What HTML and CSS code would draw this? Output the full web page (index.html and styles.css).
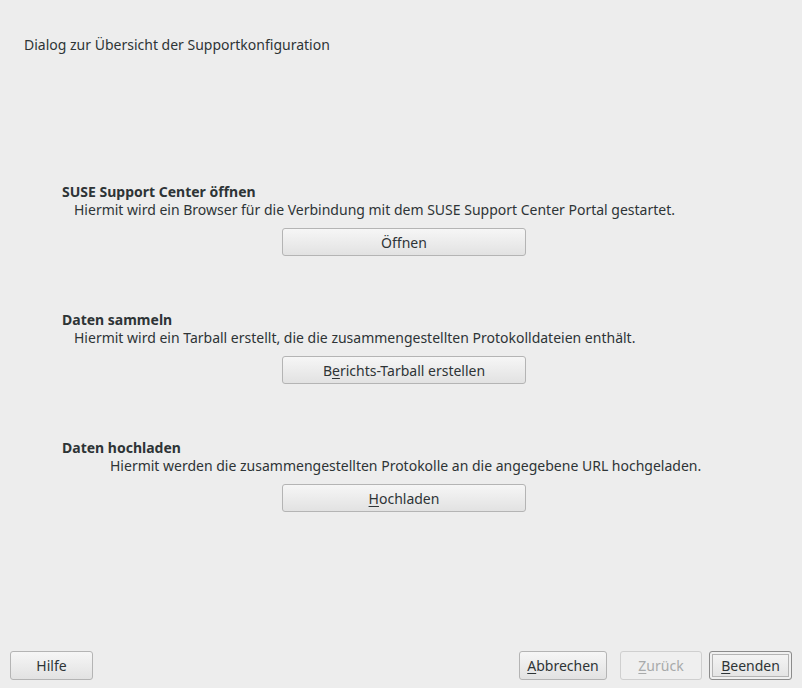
FILE: index.html
```html
<!DOCTYPE html>
<html lang="de">
<head>
<meta charset="utf-8">
<title>Supportkonfiguration</title>
<link rel="stylesheet" href="styles.css">
</head>
<body>
<div class="window">
  <div class="title">Dialog zur Übersicht der Supportkonfiguration</div>
  <div class="content">
    <section class="group">
      <div class="heading">SUSE Support Center öffnen</div>
      <div class="desc">Hiermit wird ein Browser für die Verbindung mit dem SUSE Support Center Portal gestartet.</div>
      <div class="row"><button class="btn wide">Öffnen</button></div>
    </section>
    <section class="group">
      <div class="heading">Daten sammeln</div>
      <div class="desc">Hiermit wird ein Tarball erstellt, die die zusammengestellten Protokolldateien enthält.</div>
      <div class="row"><button class="btn wide">B<u>e</u>richts-Tarball erstellen</button></div>
    </section>
    <section class="group">
      <div class="heading">Daten hochladen</div>
      <div class="desc desc-far">Hiermit werden die zusammengestellten Protokolle an die angegebene URL hochgeladen.</div>
      <div class="row"><button class="btn wide"><u>H</u>ochladen</button></div>
    </section>
  </div>
  <div class="footer">
    <button class="btn small">Hilfe</button>
    <div class="spacer"></div>
    <button class="btn small abort"><u>A</u>bbrechen</button>
    <button class="btn small" disabled><u>Z</u>urück</button>
    <button class="btn small default"><u>B</u>eenden</button>
  </div>
</div>
</body>
</html>
```

FILE: styles.css
```css
html, body {
  margin: 0;
  padding: 0;
  background: #ededed;
}
body {
  font-family: "Noto Sans", "Open Sans", sans-serif;
  font-size: 14px;
  color: #2e3436;
}
.window {
  width: 802px;
  height: 688px;
  display: flex;
  flex-direction: column;
  box-sizing: border-box;
}
.title {
  padding: 36px 0 0 24px;
  line-height: 18px;
  height: 18px;
}
.content {
  padding: 129px 0 0 62px;
  flex: 1;
}
.group {
  height: 128px;
}
.heading {
  font-weight: bold;
  line-height: 18px;
  height: 18px;
}
.desc {
  line-height: 18px;
  height: 18px;
  margin-left: 12px;
}
.desc-far {
  margin-left: 48px;
}
.row {
  padding-left: 220px;
  padding-top: 9px;
}
.btn {
  font-family: inherit;
  font-size: 14px;
  color: #2e3436;
  background: linear-gradient(#f6f6f6, #e2e2e2);
  border: 1px solid #b4b4b4;
  border-radius: 3px;
  height: 28px;
  padding: 0;
  box-sizing: border-box;
}
.btn u {
  text-underline-offset: 2px;
}
.wide {
  width: 244px;
}
.footer {
  display: flex;
  align-items: center;
  padding: 0 10px 8px 10px;
  gap: 13px;
  height: 30px;
}
.spacer { flex: 1; }
.small {
  height: 29px;
  width: 83px;
}
.abort { width: 88px; }
.btn[disabled] {
  color: #a8aaaa;
  background: #efefef;
  border-color: #cfcfcf;
  width: 82px;
}
.default {
  width: 83px;
  margin-left: -6px;
  border: 1px solid #8c8c8c;
  box-shadow: inset 0 0 0 2px #f0f0f0, inset 0 0 0 3px #b4b4b4;
}
```
